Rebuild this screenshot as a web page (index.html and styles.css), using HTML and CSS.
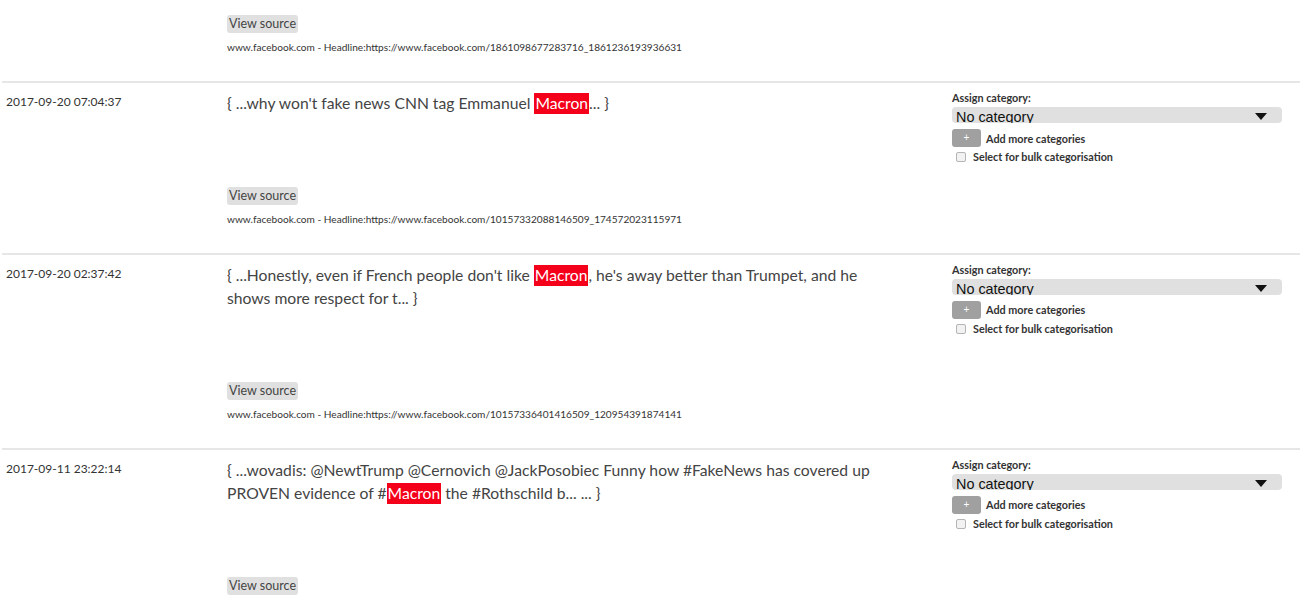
FILE: index.html
```html
<!DOCTYPE html>
<html lang="en">
<head>
  <meta charset="UTF-8" />
  <title>Mentions</title>
  <link rel="stylesheet" href="styles.css">
</head>
<body>
  <div class="results">
    <div class="row row-tail">
      <div class="date"></div>
      <div class="content">
        <button class="view-source">View source</button>
        <div class="source-url">www.facebook.com - Headline:https://www.facebook.com/1861098677283716_1861236193936631</div>
      </div>
      <div class="meta"></div>
    </div>

    <div class="row">
      <div class="date">2017-09-20 07:04:37</div>
      <div class="content">
        <p class="snippet">{ ...why won't fake news CNN tag Emmanuel <span class="hl">Macron</span>... }</p>
        <button class="view-source">View source</button>
        <div class="source-url">www.facebook.com - Headline:https://www.facebook.com/10157332088146509_174572023115971</div>
      </div>
      <div class="meta">
        <label class="meta-label">Assign category:</label>
        <div class="select-wrap">
          <select class="cat-select"><option>No category</option></select>
        </div>
        <div class="add-row"><button class="add-btn">+</button><span>Add more categories</span></div>
        <label class="bulk-row"><input type="checkbox" class="bulk-check"> Select for bulk categorisation</label>
      </div>
    </div>

    <div class="row">
      <div class="date">2017-09-20 02:37:42</div>
      <div class="content">
        <p class="snippet">{ ...Honestly, even if French people don't like <span class="hl">Macron</span>, he's away better than Trumpet, and he shows more respect for t... }</p>
        <button class="view-source">View source</button>
        <div class="source-url">www.facebook.com - Headline:https://www.facebook.com/10157336401416509_120954391874141</div>
      </div>
      <div class="meta">
        <label class="meta-label">Assign category:</label>
        <div class="select-wrap">
          <select class="cat-select"><option>No category</option></select>
        </div>
        <div class="add-row"><button class="add-btn">+</button><span>Add more categories</span></div>
        <label class="bulk-row"><input type="checkbox" class="bulk-check"> Select for bulk categorisation</label>
      </div>
    </div>

    <div class="row">
      <div class="date">2017-09-11 23:22:14</div>
      <div class="content">
        <p class="snippet">{ ...wovadis: @NewtTrump @Cernovich @JackPosobiec Funny how #FakeNews has covered up PROVEN evidence of #<span class="hl">Macron</span> the #Rothschild b... ... }</p>
        <button class="view-source">View source</button>
        <div class="source-url">www.facebook.com - Headline:https://www.facebook.com/10157336401416509_120954391874141</div>
      </div>
      <div class="meta">
        <label class="meta-label">Assign category:</label>
        <div class="select-wrap">
          <select class="cat-select"><option>No category</option></select>
        </div>
        <div class="add-row"><button class="add-btn">+</button><span>Add more categories</span></div>
        <label class="bulk-row"><input type="checkbox" class="bulk-check"> Select for bulk categorisation</label>
      </div>
    </div>
  </div>
</body>
</html>
```

FILE: styles.css
```css
body {
  margin: 0;
  font-family: Lato, 'Noto Sans', sans-serif;
  color: #3a3a3a;
  background: #fff;
}
.results {
  margin-left: 2px;
}
.row {
  display: flex;
  border-top: 2px solid #e6e6e6;
  padding-bottom: 27px;
}
.row-tail {
  border-top: none;
  padding-top: 15px;
}
.date {
  width: 221px;
  padding: 11px 0 0 4px;
  font-size: 12px;
  line-height: 16px;
  color: #333;
}
.content {
  width: 670px;
}
.snippet {
  margin: 9px 0 71px;
  font-size: 15.7px;
  line-height: 23.5px;
  color: #444;
}
.hl {
  display: inline-block;
  background: #f5001a;
  color: #fff;
  line-height: 21px;
  padding: 0 1px;
}
.view-source {
  display: block;
  height: 18px;
  padding: 0 2px;
  border: none;
  border-radius: 3px;
  background: #e0e0e0;
  color: #444;
  font-family: Lato, sans-serif;
  font-size: 12.5px;
  line-height: 18px;
}
.source-url {
  margin-top: 7px;
  font-size: 10.1px;
  line-height: 14px;
  color: #333;
}
.meta {
  margin-left: 55px;
  width: 330px;
  padding-top: 8px;
  font-size: 10.8px;
  font-weight: bold;
  color: #333;
}
.meta-label {
  display: block;
  line-height: 13px;
  margin-bottom: 3px;
}
.select-wrap {
  position: relative;
}
.select-wrap::after {
  content: '';
  position: absolute;
  right: 15px;
  top: 6px;
  border-left: 6.5px solid transparent;
  border-right: 6.5px solid transparent;
  border-top: 7px solid #111;
}
.cat-select {
  display: block;
  width: 330px;
  height: 16px;
  padding: 2px 4px 0;
  border: none;
  border-radius: 4px;
  background: #e0e0e0;
  color: #111;
  font-family: 'Liberation Sans', Arial, sans-serif;
  font-size: 14.4px;
  line-height: 16px;
  appearance: none;
  -webkit-appearance: none;
  overflow: hidden;
}
.add-row {
  display: flex;
  align-items: center;
  gap: 5px;
  margin-top: 6px;
}
.add-btn {
  width: 29px;
  height: 18px;
  border: none;
  border-radius: 3px;
  background: #a0a0a0;
  color: #fff;
  font-size: 10px;
  line-height: 18px;
  padding: 0;
}
.bulk-row {
  display: flex;
  align-items: center;
  gap: 7px;
  margin-top: 3px;
  padding-left: 4px;
  line-height: 14px;
}
.bulk-check {
  appearance: none;
  -webkit-appearance: none;
  width: 10px;
  height: 10px;
  margin: 0;
  border: 1px solid #b5b5b5;
  border-radius: 2px;
  background: #f2f2f2;
}
```
